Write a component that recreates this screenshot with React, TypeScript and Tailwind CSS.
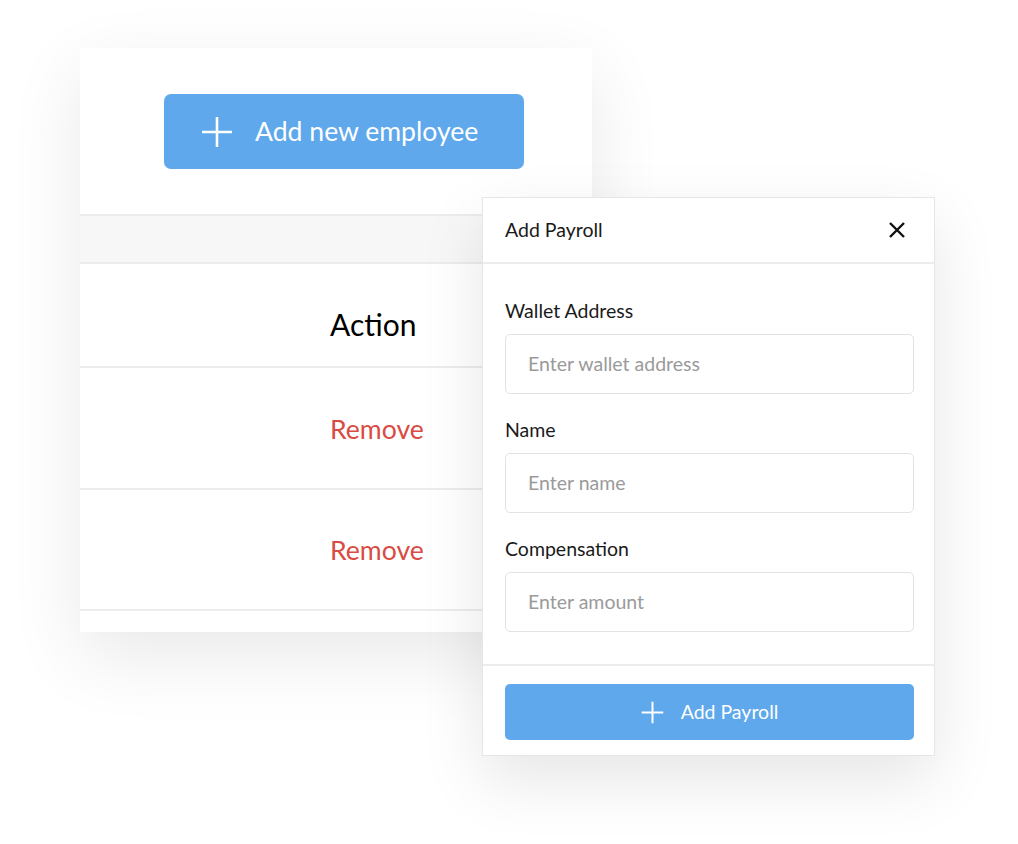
import React from "react";

function Plus({ size, stroke }: { size: number; stroke: number }) {
  return (
    <svg width={size} height={size} viewBox="0 0 32 32" fill="none">
      <path d="M16 1v30M1 16h30" stroke="white" strokeWidth={stroke} strokeLinecap="butt" />
    </svg>
  );
}

function Field({ label, placeholder }: { label: string; placeholder: string }) {
  return (
    <div className="flex flex-col">
      <div className="text-[19.5px] leading-[24px] text-[#1a1a1a]">{label}</div>
      <div className="mt-[11px] h-[60px] rounded-[5px] border border-[#e3e3e3] bg-white flex items-center px-[22px]">
        <span className="text-[19.5px] text-[#9a9a9a]">{placeholder}</span>
      </div>
    </div>
  );
}

export default function App() {
  return (
    <div
      className="relative w-[1018px] h-[844px] bg-white overflow-hidden"
      style={{ fontFamily: "Lato, 'Open Sans', sans-serif" }}
    >
      {/* Left card */}
      <div className="absolute left-[80px] top-[48px] w-[512px] h-[584px] bg-white shadow-[0_24px_70px_rgba(0,0,0,0.09)] flex flex-col">
        <div className="h-[166px] flex items-start pt-[46px] pl-[84px]">
          <div className="w-[360px] h-[75px] rounded-[7px] bg-[#5ea8eb] flex items-center pl-[37px]">
            <Plus size={32} stroke={2.6} />
            <span className="ml-[22px] text-[26.6px] text-white leading-none">Add new employee</span>
          </div>
        </div>
        <div className="h-[50px] border-t-2 border-b-2 border-[#ececec] bg-[#f7f7f7]" />
        <div className="h-[104px] border-b-2 border-[#ececec] flex items-center pl-[250px] pt-[18px]">
          <span className="text-[30px] text-black">Action</span>
        </div>
        <div className="h-[122px] border-b-2 border-[#ececec] flex items-center pl-[250px] pt-[4px]">
          <span className="text-[26.6px] text-[#d94b44]">Remove</span>
        </div>
        <div className="h-[121px] border-b-2 border-[#ececec] flex items-center pl-[250px] pt-[3px]">
          <span className="text-[26.6px] text-[#d94b44]">Remove</span>
        </div>
      </div>

      {/* Modal */}
      <div className="absolute left-[482px] top-[197px] w-[453px] h-[559px] bg-white border border-[#e6e6e6] shadow-[0_24px_60px_rgba(0,0,0,0.10)] flex flex-col">
        <div className="h-[66px] shrink-0 border-b-2 border-[#ececec] flex items-center justify-between pl-[22px] pr-[29px]">
          <span className="text-[19.5px] text-[#1a1a1a]">Add Payroll</span>
          <svg width="16" height="16" viewBox="0 0 16 16" fill="none">
            <path d="M1 1l14 14M15 1L1 15" stroke="#111" strokeWidth="2.4" />
          </svg>
        </div>
        <div className="shrink-0 flex flex-col gap-[24px] pl-[22px] pr-[20px] pt-[35px] pb-[32px] border-b-2 border-[#ececec]">
          <Field label="Wallet Address" placeholder="Enter wallet address" />
          <Field label="Name" placeholder="Enter name" />
          <Field label="Compensation" placeholder="Enter amount" />
        </div>
        <div className="pl-[22px] pr-[20px] pt-[18px]">
          <div className="h-[56px] rounded-[5px] bg-[#5ea8eb] flex items-center justify-center">
            <Plus size={23} stroke={2.8} />
            <span className="ml-[17px] text-[19.5px] text-white">Add Payroll</span>
          </div>
        </div>
      </div>
    </div>
  );
}
